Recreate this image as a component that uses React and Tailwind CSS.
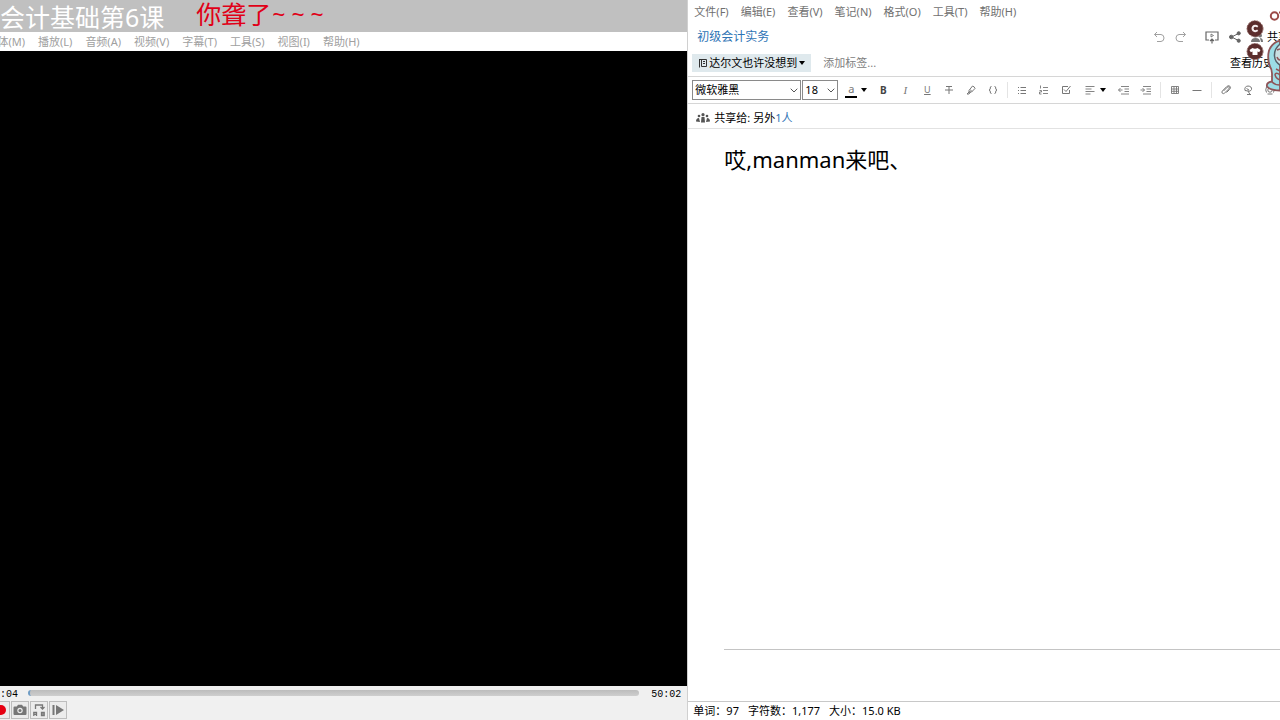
const menu = ['文件(F)', '编辑(E)', '查看(V)', '笔记(N)', '格式(O)', '工具(T)', '帮助(H)']
const playerMenu = ['体(M)', '播放(L)', '音频(A)', '视频(V)', '字幕(T)', '工具(S)', '视图(I)', '帮助(H)']

function Icon({ children, size = 'size-3', ...rest }) {
  return (
    <svg viewBox="0 0 12 12" className={size} fill="none" stroke="currentColor" strokeWidth="1" aria-hidden="true" {...rest}>
      {children}
    </svg>
  )
}

function Tool({ label, children, wide }) {
  return (
    <button type="button" aria-label={label} className={`flex h-5 shrink-0 items-center justify-center text-[#777] ${wide ? 'w-9 gap-1' : 'w-[22px]'}`}>
      {children}
    </button>
  )
}

function Caret() {
  return (
    <svg viewBox="0 0 6 4" className="h-1 w-1.5 fill-black" aria-hidden="true">
      <path d="M0 0h6L3 4z" />
    </svg>
  )
}

function Divider() {
  return <span className="mx-[3px] h-4 w-px shrink-0 bg-[#e4e4e4]" />
}

function Combo({ label, value, className }) {
  return (
    <div className={`relative h-5 border border-[#8a8a8a] ${className}`}>
      <select aria-label={label} className="block h-full w-full appearance-none bg-white pl-0.5 text-[11px] leading-[18px] text-black">
        <option>{value}</option>
      </select>
      <svg viewBox="0 0 8 5" className="pointer-events-none absolute right-0.5 top-[7px] h-[5px] w-2" fill="none" stroke="#555" aria-hidden="true">
        <path d="M.7.7 4 4 7.300.7" />
      </svg>
    </div>
  )
}

function Player() {
  const box = 'flex h-[18px] w-[18px] shrink-0 items-center justify-center border border-[#bdbdbd] bg-[#ececec] text-[#777]'
  return (
    <section className="flex w-[53.7%] shrink-0 flex-col overflow-hidden">
      <header className="flex h-8 shrink-0 items-start gap-8 whitespace-nowrap bg-[#c0c0c0] text-[25px]">
        <h1 className="leading-[34px] text-white">会计基础第6课</h1>
        <p className="flex items-center leading-7 text-[#e00018]">
          你聋了<span className="pl-px text-[23px]">~ ~ ~</span>
        </p>
      </header>
      <nav className="flex h-[19px] shrink-0 items-center gap-[13px] overflow-hidden whitespace-nowrap bg-white pt-px text-[11px] leading-4 text-[#a0a0a0]">
        {playerMenu.map((m) => <button type="button" key={m} className="first:flex first:w-[25px] first:justify-end">{m}</button>)}
      </nav>
      <div className="min-h-0 flex-1 bg-black" />
      <footer className="shrink-0 bg-[#f0f0f0] pb-px">
        <div className="flex h-[15px] items-center font-['Liberation_Mono',monospace] text-[10px] leading-3 text-black">
          <span className="w-7 pt-0.5">:04</span>
          <input
            type="range" min="0" max="100" defaultValue="0" aria-label="播放进度"
            className="mb-0.5 h-1.5 min-w-0 flex-1 appearance-none rounded-sm border-l-2 border-[#6f9cc4] bg-linear-to-b from-[#bcbcbc] to-[#cecece] [&::-webkit-slider-thumb]:size-0 [&::-webkit-slider-thumb]:appearance-none"
          />
          <span className="ml-3 mr-1.5 pt-0.5">50:02</span>
        </div>
        <div className="flex gap-px">
          <button type="button" aria-label="录制" className="flex h-[18px] w-[10px] shrink-0 items-center justify-end overflow-hidden border border-l-0 border-[#bdbdbd] bg-[#ececec]">
            <span className="mr-[3px] size-[10px] shrink-0 rounded-full bg-[#e60012]" />
          </button>
          <button type="button" aria-label="快照" className={box}>
            <svg viewBox="0 0 14 12" className="h-3 w-3.5" fill="currentColor">
              <path d="M1.500 2.500h2.300L5 .8h4l1.200 1.700h2.300q1 0 1 1v6.500q0 1-1 1h-11q-1 0-1-1V3.500q0-1 1-1z" />
              <circle cx="7" cy="6.500" r="2.700" fill="#ececec" /><circle cx="7" cy="6.500" r="1.500" />
            </svg>
          </button>
          <button type="button" aria-label="A-B 循环" className={box}>
            <svg viewBox="0 0 14 14" className="size-3.5" fill="none" stroke="currentColor" strokeWidth="1.300">
              <path d="M3.500 6V2h7v3.500M8.500 4l2 2 2-2M1.800 13V9.500h2.700V13M1.800 11.300h2.700M9.500 9.300h2.700v3.400H9.500zM9.500 11h2.700" />
            </svg>
          </button>
          <button type="button" aria-label="逐帧" className={box}>
            <svg viewBox="0 0 14 12" className="h-3 w-3.5" fill="currentColor"><path d="M1.500 1h2v10h-2zM5 1l8 5-8 5z" /></svg>
          </button>
        </div>
      </footer>
    </section>
  )
}

function Toolbar() {
  return (
    <div className="flex h-7 shrink-0 items-center overflow-hidden border-y border-[#d6d6d6] pl-1">
      <Combo label="字体" value="微软雅黑" className="w-[109px] shrink-0" />
      <Combo label="字号" value="18" className="ml-px w-9 shrink-0" />
      <button type="button" aria-label="文字颜色" className="ml-[7px] mr-[5px] flex w-[22px] shrink-0 items-center justify-between">
        <span className="flex h-4 w-3 items-center justify-center border-b-2 border-black text-[11px] leading-3 text-[#777]">a</span>
        <Caret />
      </button>
      <Tool label="粗体"><span className="text-[10px] font-bold text-[#444]">B</span></Tool>
      <Tool label="斜体"><span className="font-['Liberation_Serif',serif] text-[11px] italic">I</span></Tool>
      <Tool label="下划线"><span className="text-[9px] underline">U</span></Tool>
      <Tool label="删除线"><Icon><path d="M3 2.500h6M6 2.500V10M2 6h8" /></Icon></Tool>
      <Tool label="荧光笔"><Icon><path d="M4 6.500 7.500 2q2 .5 2.500 2.500L6.500 8H4zM5 5.500l2 2M2 10l2-2h1.500L4 10z" /></Icon></Tool>
      <Tool label="代码块"><Icon><path d="M4.500 2.500Q3 2.500 3.300 4T2 6q1.500.5 1.300 2t1.200 1.500M7.500 2.500Q9 2.500 8.700 4T10 6q-1.500.5-1.300 2T7.500 9.500" /></Icon></Tool>
      <Divider />
      <Tool label="项目列表"><Icon><path d="M4.500 3.500H10M4.500 6.500H10M4.500 9.500H10M2 3.500h1M2 6.500h1M2 9.500h1" /></Icon></Tool>
      <Tool label="编号列表"><Icon><path d="M5 3.500h5M5 6.500h5M5 9.500h5M2.500 1.500v3M1.500 6.500h2v1.500h-2v2h2" strokeWidth=".9" /></Icon></Tool>
      <Tool label="复选框"><Icon><path d="M8 2.500H2.500v7h7V6M4 5.500l2 2L10.500 2" /></Icon></Tool>
      <Tool label="对齐" wide><Icon><path d="M1.500 2.500h9M1.500 5h6M1.500 7.500h9M1.500 10h5" strokeWidth=".9" /></Icon><Caret /></Tool>
      <Tool label="减少缩进"><Icon><path d="M3 2.500h8M6.500 5h4.500M6.500 7.500h4.500M3 10h8M.5 6h4M2.500 4l-2 2 2 2" strokeWidth=".9" /></Icon></Tool>
      <Tool label="增加缩进"><Icon><path d="M3 2.500h8M6.500 5h4.500M6.500 7.500h4.500M3 10h8M.5 6h4M2.500 4l2 2-2 2" strokeWidth=".9" /></Icon></Tool>
      <Divider />
      <Tool label="表格"><Icon><path d="M2.500 2.500h7v7h-7zM5 2.500v7M7.500 2.500v7M2.500 5h7M2.500 7.300h7" strokeWidth=".9" /></Icon></Tool>
      <Tool label="分隔线"><Icon><path d="M1.500 6.500h9" /></Icon></Tool>
      <Divider />
      <Tool label="附件"><Icon><path d="M3.500 7 7.300 3.200q1-1 1.800-.2.700.8-.2 1.800L4.600 9q-1.200 1.200-2.300.2-1-1.200.2-2.400L6.700 2.600q1.700-1.600 3.200-.4 1.300 1.600-.3 3.200L6.500 8.500" /></Icon></Tool>
      <Tool label="语音"><Icon><path d="M3 6.500q-1-4 3-4.500 4 .3 3.500 3.500Q8.500 8 6 7zM6 7l2 3.500M5 10.500h4M4.500 4.500 7 6" /></Icon></Tool>
      <Tool label="摄像头"><Icon><path d="M2.500 3Q1 6 2.500 8.500M9.500 3Q11 6 9.500 8.500M3.500 10h5" /><circle cx="6" cy="6" r="2.200" /></Icon></Tool>
    </div>
  )
}

function Mascot() {
  return (
    <svg viewBox="0 0 42 84" className="pointer-events-none absolute right-0 top-2 h-[84px] w-[42px]" aria-hidden="true">
      <circle cx="36.500" cy="8" r="3.700" fill="#fff" stroke="#9b4a48" strokeWidth="2" />
      <path d="M41 4.500h1" stroke="#9b4a48" strokeWidth="2" />
      <circle cx="17" cy="20.700" r="8" fill="#5b2d2c" stroke="#8c625e" strokeWidth="1" strokeDasharray="2 1" />
      <path d="M19.800 18.800q-2.800-2-4.700 0-1.300 1.900.3 3.700 2 1.400 4.300-.2" fill="none" stroke="#f5eeee" strokeWidth="2" />
      <circle cx="17" cy="43.500" r="8" fill="#5b2d2c" stroke="#8c625e" strokeWidth="1" strokeDasharray="2 1" />
      <path d="m14.500 40-3 2 1.300 2.300 1.700-.8V47h5v-3.500l1.700.8 1.300-2.300-3-2q-2.500 1.500-5 0z" fill="#fff" />
      <path d="M42 32.500q-8 2-11 10-2 8 1 16 2 3 2 7v8q-6 1-5 5 3 4 13 4z" fill="#9cdde6" stroke="#8f5558" strokeWidth="1.800" />
      <path d="M42 36q-6 5-5.500 12 .5 6 5.500 9" fill="#c9dfe2" stroke="#56616a" strokeWidth="1.500" />
      <path d="M39 42l3-1M39 49q1 3 3 3M38 61l4 2M37 66q2-2 5 1M37 66q0 4 5 6M34 74q3 3 8 3" fill="none" stroke="#8f5558" strokeWidth="1.500" />
    </svg>
  )
}

function Notes() {
  return (
    <section className="relative flex min-w-0 flex-1 flex-col overflow-hidden border-l border-[#d0d0d0] bg-white">
      <nav className="flex h-[23px] shrink-0 items-center gap-3 whitespace-nowrap pl-1.5 text-[11px] leading-4 text-[#707070]">
        {menu.map((m) => <button type="button" key={m}>{m}</button>)}
      </nav>
      <div className="flex h-[27px] shrink-0 items-center whitespace-nowrap pl-[9px]">
        <button type="button" className="text-[12px] leading-4 text-[#2e74b5]">初级会计实务</button>
        <div className="ml-auto flex items-center text-[#a0a0a0]">
          <button type="button" aria-label="撤销" className="mr-2.5"><Icon><path d="M4 1 1.500 3.500 4 6M1.500 3.500H8q3 .3 3 3.500T8 10.500H4" /></Icon></button>
          <button type="button" aria-label="重做" className="mr-[18px]"><Icon><path d="m8 1 2.500 2.500L8 6M10.500 3.500H4Q1 3.800 1 7t3 3.500h4" /></Icon></button>
          <button type="button" aria-label="演示" className="mr-2.5 text-[#666]">
            <svg viewBox="0 0 14 14" className="size-3.5" fill="none" stroke="currentColor" strokeWidth="1.200" aria-hidden="true">
              <path d="M4 10H1V2h12v8h-3M7 13.500V9M5 11l2-2 2 2" /><path d="M6 4v3l2.500-1.500z" strokeWidth=".8" />
            </svg>
          </button>
          <button type="button" aria-label="分享" className="mr-2.5 text-[#666]">
            <svg viewBox="0 0 12 12" className="size-3" fill="currentColor" stroke="currentColor" aria-hidden="true">
              <path d="M9.500 2.500 2.500 6l7 3.500" fill="none" /><circle cx="2.300" cy="6" r="1.800" /><circle cx="9.700" cy="2.300" r="1.600" /><circle cx="9.700" cy="9.700" r="1.600" />
            </svg>
          </button>
          <button type="button" className="flex items-center gap-1 text-[11px] leading-4 text-black">
            <svg viewBox="0 0 12 12" className="size-3" fill="#777" aria-hidden="true">
              <circle cx="4.500" cy="4" r="2.500" /><circle cx="9" cy="4.500" r="2" /><path d="M0 11q0-4 4.500-4T9 11zM10 11h2q0-4-3-4z" />
            </svg>
            <span className="w-[13px] overflow-hidden">共享</span>
          </button>
        </div>
      </div>
      <div className="flex h-[26px] shrink-0 items-center whitespace-nowrap pl-1 text-[11px] leading-4">
        <button type="button" className="flex h-[18px] items-center bg-[#dfe9ed] px-1.5 text-black">
          <svg viewBox="0 0 10 10" className="mr-px size-2.5" fill="none" stroke="#333" aria-hidden="true">
            <path d="M1.500 1v8.500M1 1.500h7.500v7H3.500v-7M5 3.500h2M5 5.500h2" />
          </svg>
          达尔文也许没想到
          <span className="ml-0.5"><Caret /></span>
        </button>
        <button type="button" className="ml-3 text-[#808080]">添加标签...</button>
        <button type="button" className="ml-auto mr-1.5 text-black">查看历史</button>
      </div>
      <Toolbar />
      <div className="flex h-[25px] shrink-0 items-center border-b border-[#e2e2e2] pl-2 pt-1 text-[11px] leading-4 text-black">
        <svg viewBox="0 0 14 10" className="mr-1 h-2.5 w-3.5" fill="#555" aria-hidden="true">
          <circle cx="3" cy="3" r="1.300" /><circle cx="7" cy="1.700" r="1.600" /><circle cx="11" cy="3" r="1.300" />
          <path d="M0 8.500q0-3.500 3-3.500l1 4zM5 9.500l.5-5.500h3l.5 5.500zM14 8.500q0-3.500-3-3.500l-1 4z" />
        </svg>
        共享给: 另外<a href="#people" className="text-[#2e74b5]">1人</a>
      </div>
      <main className="flex min-h-0 flex-1 flex-col pl-9">
        <p contentEditable suppressContentEditableWarning className="min-h-0 flex-1 pt-3.5 text-[22px] leading-8 text-black outline-none">哎,manman来吧、</p>
        <hr className="mb-[51px] border-[#c4c4c4]" />
      </main>
      <footer className="flex h-[19px] shrink-0 items-center gap-[9px] whitespace-nowrap border-t border-[#c8c8c8] pl-[5px] text-[11px] leading-4 text-black">
        <span>单词：97</span>
        <span>字符数：1,177</span>
        <span>大小：15.0 KB</span>
      </footer>
      <Mascot />
    </section>
  )
}

export default function App() {
  return (
    <div className="flex h-screen overflow-hidden bg-white font-['Noto_Sans','Noto_Sans_CJK_SC',sans-serif]">
      <Player />
      <Notes />
    </div>
  )
}
